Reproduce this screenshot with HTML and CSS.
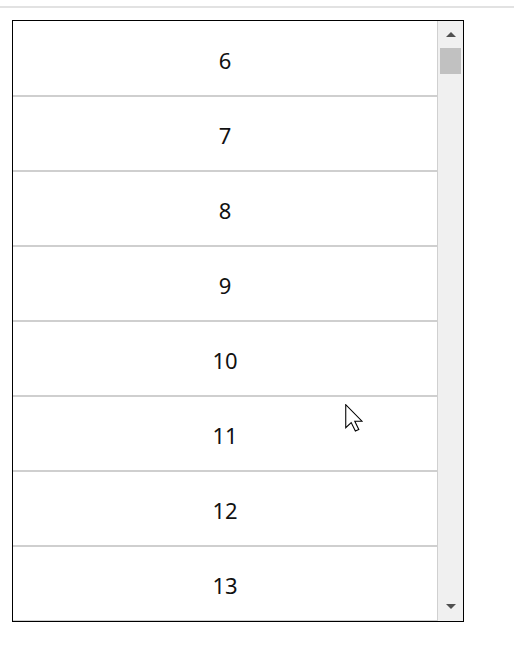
FILE: index.html
```html
<!DOCTYPE html>
<html>
<head>
<meta charset="utf-8">
<link rel="stylesheet" href="styles.css">
</head>
<body>
<div class="topline"></div>
<div class="list">
  <div class="items">
    <div class="row">6</div>
    <div class="row">7</div>
    <div class="row">8</div>
    <div class="row">9</div>
    <div class="row">10</div>
    <div class="row">11</div>
    <div class="row">12</div>
    <div class="row">13</div>
  </div>
  <div class="scrollbar">
    <div class="arrow up"></div>
    <div class="thumb"></div>
    <div class="track"></div>
    <div class="arrow down"></div>
  </div>
</div>
<svg class="cursor" width="18" height="28" viewBox="0 0 12.5 19.5">
  <path d="M0.5,0.5 L0.5,16.5 L4.3,12.9 L7.2,18.8 L9.6,17.7 L6.8,12 L11.8,12 Z" fill="#fff" stroke="#000" stroke-width="0.75" stroke-linejoin="miter"/>
</svg>
</body>
</html>
```
FILE: styles.css
```css
html, body {
  margin: 0;
  padding: 0;
  background: #fff;
}
body {
  position: relative;
  width: 514px;
  height: 662px;
  overflow: hidden;
  font-family: "Noto Sans", "Open Sans", sans-serif;
}
.topline {
  margin-top: 6px;
  height: 2px;
  background: #e2e2e2;
}
.list {
  margin: 12px 0 0 12px;
  width: 450px;
  height: 600px;
  border: 1px solid #000;
  display: flex;
  overflow: hidden;
}
.items {
  width: 424px;
  border-right: 1px solid #d0d0d0;
  overflow: hidden;
}
.row {
  border-bottom: 2px solid #cfcfcf;
  display: flex;
  align-items: center;
  justify-content: center;
  padding-top: 3px;
  box-sizing: content-box;
  height: 70px;
  font-size: 22px;
  color: #111;
}
.row:first-child {
  height: 71px;
}
.scrollbar {
  width: 25px;
  background: #f0f0f0;
  display: flex;
  flex-direction: column;
  align-items: center;
}
.arrow {
  width: 0;
  height: 0;
  border-left: 5px solid transparent;
  border-right: 5px solid transparent;
}
.arrow.up {
  margin-top: 11px;
  border-bottom: 5px solid #505050;
}
.arrow.down {
  margin-bottom: 12px;
  border-top: 5px solid #505050;
}
.thumb {
  margin-top: 11px;
  width: 21px;
  height: 26px;
  background: #c1c1c1;
}
.track {
  flex: 1;
}
.cursor {
  position: absolute;
  left: 345px;
  top: 404px;
}
```
